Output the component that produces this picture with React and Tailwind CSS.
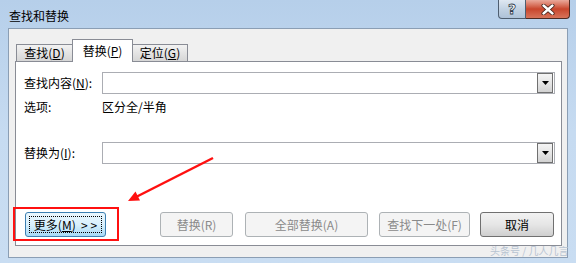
import React from "react";

function Combo() {
  return (
    <div className="h-[22px] w-[453px] border border-[#abadb3] bg-white flex justify-end items-center pr-[1px]">
      <div className="w-[16px] h-[20px] border border-[#707070] bg-gradient-to-b from-[#f4f4f4] via-[#e6e6e6] to-[#d2d2d2] flex items-center justify-center">
        <svg width="7" height="4" viewBox="0 0 7 4"><polygon points="0,0 7,0 3.5,4" fill="#000" /></svg>
      </div>
    </div>
  );
}

function DisabledBtn({ w, ml, children }) {
  return (
    <div className={`${w} ${ml} h-[25px] rounded-[3px] border border-[#adb2b5] bg-[#f4f4f4] text-[#8a8a8a] flex items-center justify-center`}>
      {children}
    </div>
  );
}

export default function App() {
  return (
    <div className="relative w-[576px] h-[263px] overflow-hidden bg-gradient-to-b from-[#b6cfea] via-[#c6dbf1] to-[#c9ddf2] font-['Noto_Sans_CJK_SC',sans-serif] text-[12px] leading-[16px] text-black">
      {/* title bar */}
      <div className="h-[28px] flex items-start">
        <div className="pl-[9px] pt-[8px] text-[12px] leading-[16px]">查找和替换</div>
        <div className="ml-auto mr-[6px] flex">
          <div className="w-[28px] h-[19px] rounded-bl-[4px] border border-t-0 border-[#4e5e70] bg-gradient-to-b from-[#dfe8f2] via-[#c2d2e3] to-[#aec2d8] flex items-center justify-center">
            <span className="text-white font-bold text-[14px] leading-[14px] font-['DejaVu_Sans',sans-serif] [-webkit-text-stroke:0.8px_#2e3b4a]">?</span>
          </div>
          <div className="w-[44px] h-[19px] rounded-br-[4px] border border-t-0 border-l-0 border-[#4e2a22] bg-gradient-to-b from-[#e9a99b] via-[#c8452c] to-[#d7735a] flex items-center justify-center">
            <svg width="14" height="11" viewBox="0 0 14 11">
              <path d="M2.5 1.5 L11.5 9.5 M11.5 1.5 L2.5 9.5" stroke="#3a1a12" strokeWidth="4" strokeLinecap="round" />
              <path d="M2.5 1.5 L11.5 9.5 M11.5 1.5 L2.5 9.5" stroke="#ffffff" strokeWidth="2.4" strokeLinecap="round" />
            </svg>
          </div>
        </div>
      </div>

      {/* client area */}
      <div className="mx-[8px] h-[230px] bg-[#f0f0f0] border border-[#8b9eb4] flex flex-col">
        {/* tabs */}
        <div className="h-[32px] pl-[7px] flex items-end">
          <div className="w-[57px] h-[17px] border border-b-0 border-[#898c95] bg-gradient-to-b from-[#f2f2f2] via-[#e4e4e4] to-[#d6d6d6] flex items-center justify-center">
            <span>查找(<span className="underline">D</span>)</span>
          </div>
          <div className="relative z-10 -mb-[1px] -ml-[1px] w-[61px] h-[23px] border border-b-0 border-[#898c95] bg-white flex items-start justify-center pt-[3px]">
            <span>替换(<span className="underline">P</span>)</span>
          </div>
          <div className="-ml-[1px] w-[56px] h-[17px] border border-b-0 border-[#898c95] bg-gradient-to-b from-[#f2f2f2] via-[#e4e4e4] to-[#d6d6d6] flex items-center justify-center">
            <span>定位(<span className="underline">G</span>)</span>
          </div>
        </div>

        {/* panel */}
        <div className="ml-[6px] w-[547px] h-[185px] border border-[#898c95] bg-white flex flex-col">
          <div className="pl-[8px] pt-[10px] grid grid-cols-[78px_453px]">
            <div className="h-[22px] flex items-center">查找内容(<span className="underline">N</span>):</div>
            <Combo />
            <div className="mt-[6px] h-[14px] flex items-center">选项:</div>
            <div className="mt-[6px] h-[14px] flex items-center">区分全/半角</div>
            <div className="mt-[28px] h-[22px] flex items-center">替换为(<span className="underline">I</span>):</div>
            <div className="mt-[28px]"><Combo /></div>
          </div>

          <div className="mt-[48px] pl-[9px] flex">
            <div className="relative w-[81px] h-[25px] rounded-[3px] border border-[#3c7fb1] bg-gradient-to-b from-[#eaf6fd] via-[#d9f0fc] to-[#a7d9f5] flex items-center justify-center">
              <span className="absolute inset-[3px] border border-dotted border-black"></span>
              <span className="whitespace-pre">更多(<span className="underline">M</span>)  &gt; &gt;</span>
            </div>
            <DisabledBtn w="w-[73px]" ml="ml-[54px]">替换(R)</DisabledBtn>
            <DisabledBtn w="w-[123px]" ml="ml-[12px]">全部替换(A)</DisabledBtn>
            <DisabledBtn w="w-[91px]" ml="ml-[11px]">查找下一处(F)</DisabledBtn>
            <div className="ml-[10px] w-[74px] h-[25px] rounded-[3px] border border-[#707070] bg-gradient-to-b from-[#f2f2f2] via-[#e6e6e6] to-[#cfcfcf] flex items-center justify-center">
              取消
            </div>
          </div>
        </div>
      </div>

      {/* annotations */}
      <div className="absolute left-[13px] top-[207px] w-[106px] h-[34px] border-2 border-[#ff1010]"></div>
      <svg className="absolute left-0 top-0" width="576" height="263" viewBox="0 0 576 263">
        <line x1="213" y1="158" x2="137" y2="196.5" stroke="#ff1010" strokeWidth="2.5" />
        <polygon points="128,201 140,200.5 135.5,191.5" fill="#ff1010" />
      </svg>
      <div className="absolute left-[490px] top-[245px] text-[10px] leading-[12px] text-[#b8c4d2] whitespace-nowrap">头条号 / 几人几言</div>
    </div>
  );
}
